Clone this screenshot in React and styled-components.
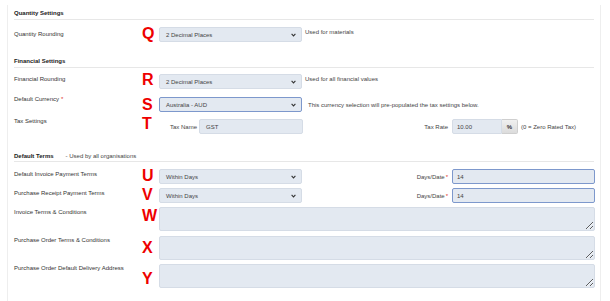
import React from "react";
import styled, { createGlobalStyle } from "styled-components";

const Global = createGlobalStyle`
  html, body { margin: 0; padding: 0; background: #fff; }
  body {
    font-family: "Liberation Sans", Arial, sans-serif;
    font-size: 6px;
    color: #333;
  }
`;

const Card = styled.div`
  display: flow-root;
  margin: 5px 9px 0 7px;
  height: 296px;
  box-sizing: border-box;
  border-left: 1px solid #eeeeee;
  border-right: 1px solid #eeeeee;
  padding: 0 5px 0 6px;
`;

const SectionHeader = styled.div`
  display: flex;
  align-items: center;
  gap: 12px;
  margin-top: ${(p) => p.$mt}px;
  margin-right: 1px;
  padding-bottom: ${(p) => p.$pb}px;
  border-bottom: 1px solid #e7e7e7;
  line-height: 8px;
  color: #222;
`;

const HeaderTitle = styled.span`
  font-weight: bold;
`;

const HeaderNote = styled.span`
  color: #444;
`;

const Row = styled.div`
  display: grid;
  grid-template-columns: 127px 18px 144px 145px 147px;
  align-items: start;
  margin-top: ${(p) => p.$mt}px;
  height: ${(p) => p.$h || 15}px;
`;

const Label = styled.div`
  grid-column: 1;
  line-height: 8px;
  margin-top: ${(p) => p.$mt || 0}px;
  color: #333;
  white-space: nowrap;
`;

const Req = styled.span`
  color: #e0302a;
  margin-left: ${(p) => p.$gap || 2}px;
`;

const Marker = styled.div`
  grid-column: 2;
  height: 0;
  padding-left: 1px;
  margin-top: ${(p) => p.$mt || 0}px;
  font-family: "Liberation Sans", Arial, sans-serif;
  font-weight: bold;
  font-size: 16px;
  line-height: 16px;
  color: #ee0000;
`;

const SelectBox = styled.div`
  grid-column: 3;
  box-sizing: border-box;
  width: 143px;
  height: 15px;
  display: flex;
  align-items: center;
  justify-content: space-between;
  padding: 0 5px 0 6px;
  background: #e3e9f1;
  border: 1px solid ${(p) => (p.$focus ? "#7d98cc" : "#d5dce6")};
  border-radius: 2px;
  color: #444;
  line-height: 8px;
`;

const Chevron = () => (
  <svg width="5" height="4" viewBox="0 0 5 4">
    <path d="M0.6 0.9 L2.5 2.9 L4.4 0.9" fill="none" stroke="#333" strokeWidth="1.1" />
  </svg>
);

const Description = styled.div`
  grid-column: 4 / span 2;
  padding-left: ${(p) => p.$pl || 2}px;
  margin-top: ${(p) => p.$mt || 0}px;
  line-height: 8px;
  color: #444;
  white-space: nowrap;
`;

const InlineGroup = styled.div`
  grid-column: ${(p) => p.$col};
  display: flex;
  align-items: center;
  justify-content: ${(p) => p.$justify || "flex-start"};
  gap: ${(p) => p.$gap || 0}px;
  height: 15px;
`;

const SubLabel = styled.span`
  line-height: 8px;
  color: #444;
  white-space: nowrap;
`;

const TextInput = styled.div`
  box-sizing: border-box;
  width: ${(p) => p.$w}px;
  height: 15px;
  display: flex;
  align-items: center;
  margin-left: ${(p) => p.$ml || 0}px;
  padding-left: ${(p) => p.$pl || 4}px;
  background: #e3e9f1;
  border: 1px solid ${(p) => (p.$focus ? "#7d98cc" : "#d5dce6")};
  border-radius: ${(p) => (p.$joined ? "2px 0 0 2px" : "2px")};
  color: #444;
  line-height: 8px;
`;

const Addon = styled.div`
  box-sizing: border-box;
  width: 16px;
  height: 15px;
  display: flex;
  align-items: center;
  justify-content: center;
  background: linear-gradient(#f0f0f0, #dcdcdc);
  border: 1px solid #cfcfcf;
  border-left: none;
  border-radius: 0 2px 2px 0;
  color: #333;
  font-weight: bold;
`;

const Note = styled.span`
  margin-left: 3px;
  color: #444;
  line-height: 8px;
  white-space: nowrap;
`;

const TextArea = styled.textarea`
  grid-column: 3 / -1;
  display: block;
  box-sizing: border-box;
  width: 436px;
  height: 24px;
  margin: 0;
  padding: 2px 4px;
  background: #e3e9f1;
  border: 1px solid #d5dce6;
  border-radius: 2px;
  resize: vertical;
  outline: none;
  font: inherit;
`;

export default function App() {
  return (
    <>
      <Global />
      <Card>
        <SectionHeader $mt={4} $pb={2}>
          <HeaderTitle>Quantity Settings</HeaderTitle>
        </SectionHeader>
        <Row $mt={7}>
          <Label $mt={3}>Quantity Rounding</Label>
          <Marker $mt={-1}>Q</Marker>
          <SelectBox>
            <span>2 Decimal Places</span>
            <Chevron />
          </SelectBox>
          <Description $mt={1}>Used for materials</Description>
        </Row>

        <SectionHeader $mt={15} $pb={2}>
          <HeaderTitle>Financial Settings</HeaderTitle>
        </SectionHeader>
        <Row $mt={6}>
          <Label $mt={1}>Financial Rounding</Label>
          <Marker $mt={-2}>R</Marker>
          <SelectBox>
            <span>2 Decimal Places</span>
            <Chevron />
          </SelectBox>
          <Description $mt={1}>Used for all financial values</Description>
        </Row>
        <Row $mt={8}>
          <Label $mt={-2}>
            Default Currency<Req $gap={2}>*</Req>
          </Label>
          <Marker $mt={0}>S</Marker>
          <SelectBox $focus>
            <span>Australia - AUD</span>
            <Chevron />
          </SelectBox>
          <Description $mt={4} $pl={5}>
            This currency selection will pre-populated the tax settings below.
          </Description>
        </Row>
        <Row $mt={7}>
          <Label $mt={-2}>Tax Settings</Label>
          <Marker $mt={-3}>T</Marker>
          <InlineGroup $col={3} $justify="flex-end" $gap={2}>
            <SubLabel>Tax Name</SubLabel>
            <TextInput $w={104} $pl={6}>GST</TextInput>
          </InlineGroup>
          <InlineGroup $col={4} $justify="flex-end">
            <SubLabel>Tax Rate</SubLabel>
          </InlineGroup>
          <InlineGroup $col={5} $justify="flex-start">
            <TextInput $w={50} $pl={4} $ml={4} $joined>10.00</TextInput>
            <Addon>%</Addon>
            <Note>(0 = Zero Rated Tax)</Note>
          </InlineGroup>
        </Row>

        <SectionHeader $mt={18} $pb={1}>
          <HeaderTitle>Default Terms</HeaderTitle>
          <HeaderNote>- Used by all organisations</HeaderNote>
        </SectionHeader>
        <Row $mt={7}>
          <Label $mt={1}>Default Invoice Payment Terms</Label>
          <Marker $mt={-1}>U</Marker>
          <SelectBox>
            <span>Within Days</span>
            <Chevron />
          </SelectBox>
          <InlineGroup $col={4} $justify="flex-end">
            <SubLabel>
              Days/Date<Req $gap={1}>*</Req>
            </SubLabel>
          </InlineGroup>
          <InlineGroup $col={5} $justify="flex-end">
            <TextInput $w={143} $pl={4} $focus>14</TextInput>
          </InlineGroup>
        </Row>
        <Row $mt={4}>
          <Label $mt={1}>Purchase Receipt Payment Terms</Label>
          <Marker $mt={-1}>V</Marker>
          <SelectBox>
            <span>Within Days</span>
            <Chevron />
          </SelectBox>
          <InlineGroup $col={4} $justify="flex-end">
            <SubLabel>
              Days/Date<Req $gap={1}>*</Req>
            </SubLabel>
          </InlineGroup>
          <InlineGroup $col={5} $justify="flex-end">
            <TextInput $w={143} $pl={4} $focus>14</TextInput>
          </InlineGroup>
        </Row>
        <Row $mt={4} $h={24}>
          <Label $mt={1}>Invoice Terms &amp; Conditions</Label>
          <Marker $mt={1}>W</Marker>
          <TextArea readOnly />
        </Row>
        <Row $mt={5} $h={24}>
          <Label $mt={0}>Purchase Order Terms &amp; Conditions</Label>
          <Marker $mt={4}>X</Marker>
          <TextArea readOnly />
        </Row>
        <Row $mt={4} $h={24}>
          <Label $mt={0}>Purchase Order Default Delivery Address</Label>
          <Marker $mt={7}>Y</Marker>
          <TextArea readOnly />
        </Row>
      </Card>
    </>
  );
}
